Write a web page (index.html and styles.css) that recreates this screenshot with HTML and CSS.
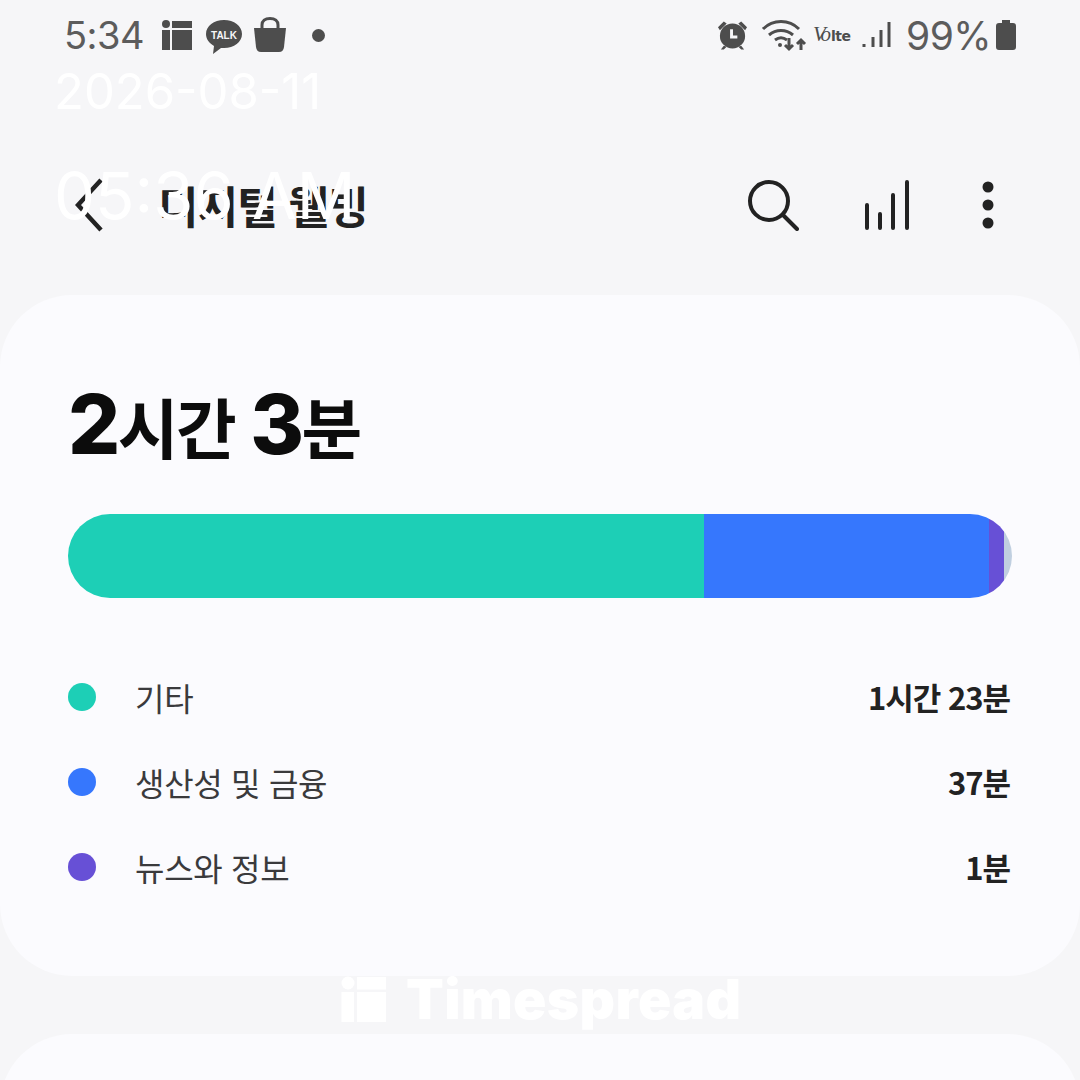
FILE: index.html
```html
<!DOCTYPE html>
<html lang="ko">
  <head>
    <meta charset="UTF-8" />
    <meta name="viewport" content="width=device-width, initial-scale=1.0" />
    <title>디지털 웰빙</title>
    <link rel="stylesheet" href="styles.css">
  </head>
  <body>
    <div class="page">
      <div class="status-bar">
        <div class="status-left">
          <span class="clock">5:34</span>
          <svg class="ic-ts" viewBox="0 0 32 32"><circle cx="5" cy="5" r="4"/><rect x="1" y="11" width="8" height="20"/><rect x="11" y="2" width="20" height="7"/><rect x="11" y="11" width="20" height="20"/></svg>
          <svg class="ic-talk" viewBox="0 0 38 36"><path d="M19 1C9 1 1 7 1 15c0 5 3 9 8 12l-1 8 8-6h3c10 0 18-6 18-14S29 1 19 1z"/><text x="19" y="19.500" class="talk-text" text-anchor="middle">TALK</text></svg>
          <svg class="ic-bag" viewBox="0 0 34 36"><path d="M1 11h32l-2 19c-.4 3-2 5-5 5H8c-3 0-4.600-2-5-5z"/><path class="line" d="M9 13V8c0-4 3-6.500 8-6.500s8 2.500 8 6.500v5"/></svg>
          <span class="dot-note"></span>
        </div>
        <div class="status-right">
          <svg class="ic-alarm" viewBox="0 0 32 32"><circle cx="16" cy="17" r="13"/><path class="line-w" d="M15 10v8h6"/><path d="M1 8l6-6 3 2-7 7zM31 8l-6-6-3 2 7 7zM7 27l-3 4 3 0 3-3zM25 27l3 4-3 0-3-3z"/></svg>
          <svg class="ic-wifi" viewBox="0 0 46 34"><path class="line" d="M2 11C12 1 28 1 38 11M8 17c7-6 17-6 24 0M14 22c4-3 8-3 12 0"/><circle cx="19" cy="27" r="2"/><path class="line" d="M28 20v11M24 27l4 4 4-4M40 32V22M36 26l4-4 4 4"/></svg>
          <span class="volte"><i>Vo</i><b>lte</b></span>
          <svg class="ic-signal" viewBox="0 0 30 30"><path class="line" d="M3 24v3M12 17v10M20 10v17M28 2v25"/></svg>
          <span class="battery-pct">99%</span>
          <svg class="ic-battery" viewBox="0 0 22 30"><path d="M7 0h8v3h3c2 0 3 1 3 3v21c0 2-1 3-3 3H4c-2 0-3-1-3-3V6c0-2 1-3 3-3h3z"/></svg>
        </div>
      </div>

      <div class="app-bar">
        <button class="back-btn" type="button">
          <svg viewBox="0 0 30 58"><path d="M26 4L3 29l23 25"/></svg>
        </button>
        <h1 class="app-title">디지털 웰빙</h1>
        <div class="app-actions">
          <svg class="ic-search" viewBox="0 0 52 52"><circle cx="22" cy="22" r="19"/><path d="M36 36l14 14"/></svg>
          <svg class="ic-chart" viewBox="0 0 46 52"><path d="M3 26v23M16 35v14M29 16v33M43 3v46"/></svg>
          <svg class="ic-more" viewBox="0 0 14 50"><circle cx="7" cy="7" r="5.500"/><circle cx="7" cy="25" r="5.500"/><circle cx="7" cy="43" r="5.500"/></svg>
        </div>
      </div>

      <section class="card">
        <div class="total"><span class="num">2</span>시간 <span class="num">3</span>분</div>
        <div class="usage-bar">
          <div class="seg seg-other"></div>
          <div class="seg seg-prod"></div>
          <div class="seg seg-news"></div>
          <div class="seg seg-rest"></div>
        </div>
        <ul class="legend">
          <li class="legend-row">
            <span class="legend-dot seg-other"></span>
            <span class="legend-name">기타</span>
            <span class="legend-time">1시간 23분</span>
          </li>
          <li class="legend-row">
            <span class="legend-dot seg-prod"></span>
            <span class="legend-name">생산성 및 금융</span>
            <span class="legend-time">37분</span>
          </li>
          <li class="legend-row">
            <span class="legend-dot seg-news"></span>
            <span class="legend-name">뉴스와 정보</span>
            <span class="legend-time">1분</span>
          </li>
        </ul>
      </section>

      <section class="card card-next"></section>

      <!-- watermark sits over the page -->
      <div class="stamp-date">2026-08-11</div>
      <div class="stamp-time">05:36 AM</div>
      <div class="brand">
        <svg viewBox="0 0 46 46"><circle cx="7" cy="7" r="6.500"/><rect x="0.500" y="16" width="12.500" height="30"/><rect x="16" y="1" width="29" height="12.500"/><rect x="16" y="16" width="29" height="30"/></svg>
        <span>Timespread</span>
      </div>
    </div>
  </body>
</html>
```

FILE: styles.css
```css
* {
  box-sizing: border-box;
}
html,
body {
  margin: 0;
  padding: 0;
}
body {
  background-color: #f6f6f8;
  font-family: "Noto Sans CJK KR", "Noto Sans", sans-serif;
}
.page {
  position: relative;
  width: 1080px;
  height: 1080px;
  overflow: hidden;
}

/* status bar */
.status-bar {
  height: 70px;
  display: flex;
  justify-content: space-between;
  align-items: center;
  padding: 0 63px 0 64px;
  color: #5c5c5c;
}
.status-left,
.status-right {
  display: flex;
  align-items: center;
}
.status-bar svg {
  fill: #4d4d4d;
  display: block;
}
.status-bar .line {
  fill: none;
  stroke: #4d4d4d;
  stroke-width: 3;
}
.status-bar .line-w {
  fill: none;
  stroke: #f6f6f8;
  stroke-width: 3;
}
.clock {
  font-family: Inter, sans-serif;
  font-size: 38px;
  width: 97px;
  letter-spacing: -0.5px;
}
.ic-ts {
  width: 32px;
  height: 32px;
}
.ic-talk {
  width: 38px;
  height: 36px;
  margin-left: 12px;
  margin-top: 3px;
}
.talk-text {
  font-family: "Liberation Sans", sans-serif;
  font-size: 10px;
  font-weight: bold;
  fill: #f6f6f8;
}
.ic-bag {
  width: 34px;
  height: 36px;
  margin-left: 10px;
}
.dot-note {
  width: 13px;
  height: 13px;
  border-radius: 50%;
  background-color: #4d4d4d;
  margin-left: 25px;
}
.ic-alarm {
  width: 31px;
  height: 32px;
}
.ic-wifi {
  width: 46px;
  height: 34px;
  margin-left: 13px;
}
.volte {
  display: flex;
  align-items: baseline;
  width: 42px;
  margin-left: 6px;
  line-height: 20px;
  color: #4d4d4d;
}
.volte i {
  font-family: "Liberation Serif", serif;
  font-size: 21px;
  letter-spacing: -3px;
}
.volte b {
  font-family: "DejaVu Sans", sans-serif;
  font-size: 14px;
  letter-spacing: -0.5px;
  margin-left: 3px;
}
.ic-signal {
  width: 30px;
  height: 30px;
  margin-left: 6px;
}
.battery-pct {
  font-family: Inter, sans-serif;
  font-size: 39px;
  width: 89px;
  margin-left: 15px;
  letter-spacing: -0.5px;
}
.ic-battery {
  width: 22px;
  height: 30px;
}

/* app bar */
.app-bar {
  height: 135px;
  margin-top: 67px;
  display: flex;
  align-items: center;
  padding: 0 85px 0 75px;
}
.back-btn {
  width: 83px;
  height: 58px;
  padding: 0;
  border: none;
  background: none;
  display: flex;
}
.back-btn svg {
  width: 30px;
  height: 58px;
  fill: none;
  stroke: #222;
  stroke-width: 4.500;
}
.app-title {
  margin: 0;
  font-size: 44px;
  font-weight: 700;
  color: #222;
  letter-spacing: -0.800px;
}
.app-actions {
  margin-left: auto;
  display: flex;
  align-items: center;
}
.app-actions svg {
  display: block;
  fill: none;
  stroke: #222;
  stroke-width: 4;
  stroke-linecap: round;
}
.ic-search {
  width: 52px;
  height: 52px;
}
.ic-chart {
  width: 46px;
  height: 52px;
  margin-left: 65px;
}
.app-actions .ic-more {
  width: 14px;
  height: 50px;
  margin-left: 71px;
  fill: #222;
  stroke: none;
}

/* cards */
.card {
  margin-top: 23px;
  height: 681px;
  padding: 75px 68px 0;
  background-color: #fbfbfe;
  border-radius: 72px;
}
.card-next {
  margin-top: 58px;
  height: 200px;
}
.total {
  font-size: 66px;
  font-weight: 700;
  line-height: 110px;
  height: 110px;
  color: #0c0c0c;
  letter-spacing: -2.500px;
}
.total .num {
  font-family: Inter, sans-serif;
  font-size: 82px;
  font-weight: 800;
}
.usage-bar {
  display: flex;
  height: 84px;
  margin-top: 34px;
  border-radius: 42px;
  overflow: hidden;
}
.seg-other {
  background-color: #1dcfb6;
}
.seg-prod {
  background-color: #3677fd;
}
.seg-news {
  background-color: #6750d6;
}
.seg-rest {
  background-color: #c0cfe0;
}
.usage-bar .seg-other {
  width: 636px;
}
.usage-bar .seg-prod {
  width: 285px;
}
.usage-bar .seg-news {
  width: 15px;
}
.usage-bar .seg-rest {
  width: 8px;
}
.legend {
  list-style: none;
  margin: 56px 0 0;
  padding: 0;
}
.legend-row {
  display: flex;
  align-items: center;
  height: 85px;
}
.legend-dot {
  width: 28px;
  height: 28px;
  border-radius: 50%;
  margin-right: 39px;
}
.legend-name {
  font-size: 32px;
  letter-spacing: -0.300px;
  color: #3a3a3c;
}
.legend-time {
  margin-left: auto;
  margin-right: 2px;
  font-size: 31px;
  font-weight: 700;
  color: #222;
  letter-spacing: -1px;
}

/* watermark */
.stamp-date,
.stamp-time {
  position: absolute;
  left: 54px;
  font-family: Inter, sans-serif;
  color: #fff;
}
.stamp-date {
  top: 62px;
  font-size: 49px;
  line-height: 60px;
}
.stamp-time {
  top: 160px;
  font-size: 65px;
  line-height: 72px;
}
.brand {
  position: absolute;
  left: 341px;
  top: 966px;
  display: flex;
  align-items: center;
  color: #fff;
  font-family: Inter, sans-serif;
  font-size: 55px;
  font-weight: 900;
  letter-spacing: 0.400px;
}
.brand svg {
  width: 46px;
  height: 46px;
  fill: #fff;
  margin-right: 19px;
}
```
